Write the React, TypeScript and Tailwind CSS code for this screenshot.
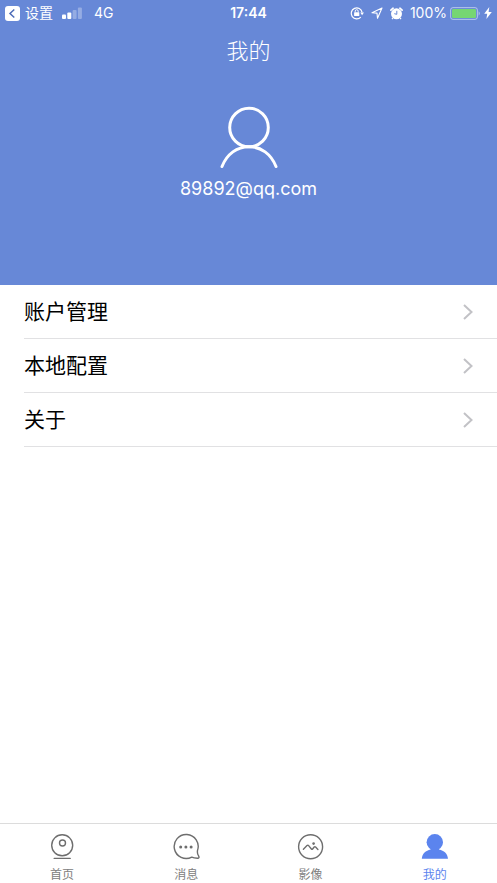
import type { ReactNode } from "react";

type TabKey = "home" | "message" | "image" | "mine";

const menus: { label: string; href: string }[] = [
	{ label: "账户管理", href: "#account" },
	{ label: "本地配置", href: "#config" },
	{ label: "关于", href: "#about" },
];

const tabs: { key: TabKey; label: string; icon: ReactNode }[] = [
	{ key: "home", label: "首页", icon: <CameraIcon /> },
	{ key: "message", label: "消息", icon: <MessageIcon /> },
	{ key: "image", label: "影像", icon: <ImageIcon /> },
	{ key: "mine", label: "我的", icon: <MineIcon /> },
];

/* ===== tab icons ===== */

function CameraIcon() {
	return (
		<svg className="h-7 w-7" viewBox="0 0 28 28" fill="none" stroke="currentColor" strokeWidth="1.4" aria-hidden="true">
			<circle cx="14.2" cy="12.3" r="10.5" />
			<circle cx="14.5" cy="10" r="3" />
			<path d="M6.2 25.4h16" strokeLinecap="round" />
		</svg>
	);
}

function MessageIcon() {
	return (
		<svg className="h-7 w-7" viewBox="0 0 28 28" fill="none" stroke="currentColor" strokeWidth="1.4" aria-hidden="true">
			<path
				d="M19.8 24.1A12 12 0 1 1 25.5 17.5C25.2 19.5 25.5 21.5 26.7 23.2C27.3 24.3 26.9 25.4 25.6 25.3C23.4 25.2 21.5 25 19.8 24.1Z"
				strokeLinejoin="round"
			/>
			<g fill="currentColor" stroke="none">
				<circle cx="8.7" cy="14" r="1.5" />
				<circle cx="13.9" cy="14" r="1.5" />
				<circle cx="19.1" cy="14" r="1.5" />
			</g>
		</svg>
	);
}

function ImageIcon() {
	return (
		<svg className="h-7 w-7" viewBox="0 0 28 28" fill="none" stroke="currentColor" strokeWidth="1.4" aria-hidden="true">
			<circle cx="13.6" cy="13.8" r="12" />
			<path
				d="M6.4 16.2L10 12.6Q10.8 11.8 11.6 12.6L14.4 16Q15 16.6 15.6 16L17.2 14Q17.9 13.3 18.6 14L20.9 16.4"
				strokeLinecap="round"
				strokeLinejoin="round"
			/>
			<circle cx="16.6" cy="10.6" r="1.3" fill="currentColor" stroke="none" />
		</svg>
	);
}

function MineIcon() {
	return (
		<svg className="h-7 w-7" viewBox="0 0 28 28" fill="currentColor" aria-hidden="true">
			<circle cx="13.8" cy="9.2" r="8.2" />
			<path d="M9.5 14h8.6L18 16.4C23 17.4 26.6 20.4 27 25.8H.8C1.2 20.4 4.8 17.4 9.6 16.4Z" />
		</svg>
	);
}

/* ===== status bar ===== */

function StatusBar() {
	return (
		<div className="grid h-[26px] grid-cols-[1fr_auto_1fr] items-center px-[5px] text-sm leading-5">
			<div className="flex items-center">
				<svg className="mr-[5px] h-[15px] w-[15px]" viewBox="0 0 15 15" aria-hidden="true">
					<rect width="15" height="15" rx="3" fill="#fff" />
					<path d="M9.3 3.5L5 7.5l4.3 4" fill="none" stroke="#4d6cb8" strokeWidth="1.5" />
				</svg>
				<a href="#settings">设置</a>
				<svg className="ml-[9px] mr-3 h-3 w-5" viewBox="0 0 20 12" fill="#fff" aria-hidden="true">
					<rect x="0" y="7.5" width="4" height="4.5" rx="1" />
					<rect x="5.3" y="5.5" width="4" height="6.5" rx="1" />
					<rect x="10.6" y="3" width="4" height="9" rx="1" opacity="0.3" />
					<rect x="15.9" y="0.5" width="4" height="11.5" rx="1" opacity="0.3" />
				</svg>
				<span>4G</span>
			</div>

			<time className="font-semibold">17:44</time>

			<div className="flex items-center justify-end">
				{/* rotation lock */}
				<svg className="mr-[7px] h-[14px] w-[14px]" viewBox="0 0 14 14" fill="none" stroke="#fff" aria-hidden="true">
					<path d="M10.8 11.1A5.5 5.5 0 1 1 12.1 6.4" strokeWidth="1.2" />
					<path d="M10.2 6.5h3.8l-1.9 2.7Z" fill="#fff" stroke="none" />
					<rect x="4.1" y="6.2" width="5.2" height="3.9" rx="0.5" fill="#fff" stroke="none" />
					<path d="M5.2 6.4V5.2a1.5 1.5 0 0 1 3 0v1.2" strokeWidth="1" />
				</svg>
				{/* location */}
				<svg className="mr-[7px] h-3 w-3" viewBox="0 0 12 12" fill="none" stroke="#fff" strokeWidth="1.1" strokeLinejoin="round" aria-hidden="true">
					<path d="M11 1L1 5.7l5 .4.5 5.1Z" />
				</svg>
				{/* alarm */}
				<svg className="mr-[7px] h-[13px] w-[13px]" viewBox="0 0 13 13" aria-hidden="true">
					<circle cx="6.5" cy="6.8" r="5.5" fill="#fff" />
					<path d="M.9 3.2L3.1 1.2M12.1 3.2L9.9 1.2" stroke="#fff" strokeWidth="1.7" strokeLinecap="round" />
					<path d="M2.8 11l-.8 1.1M10.2 11l.8 1.1" stroke="#fff" strokeWidth="1.2" />
					<path d="M6.8 3.8v3.5l-2.5-.6" fill="none" stroke="#6788d7" strokeWidth="1" />
				</svg>
				<span>100%</span>
				<svg className="ml-[3px] h-[13px] w-[31px]" viewBox="0 0 31 13" aria-hidden="true">
					<rect x="0.6" y="0.6" width="26.8" height="11.8" rx="2.4" fill="none" stroke="#fff" strokeOpacity="0.5" strokeWidth="1" />
					<rect x="2" y="2" width="24" height="9" rx="1.2" fill="#76d672" />
					<path d="M28.6 4.3q2.4 2.2 0 4.4Z" fill="#fff" fillOpacity="0.5" />
				</svg>
				<svg className="ml-[3px] h-3 w-2" viewBox="0 0 8 12" fill="#fff" aria-hidden="true">
					<path d="M5.3 0L.2 6.8h3L2.4 12 7.8 5H4.6Z" />
				</svg>
			</div>
		</div>
	);
}

export default function App() {
	const active: TabKey = "mine";

	return (
		<div className="flex min-h-screen flex-col bg-white font-['Inter','Noto_Sans_CJK_SC',sans-serif]">
			<header className="bg-[#6788d7] pb-20 text-white">
				<StatusBar />
				<h1 className="pb-[7px] pt-[9px] text-center text-[22px] font-light leading-8">我的</h1>

				{/* avatar + account */}
				<div className="flex flex-col items-center pt-8">
					<svg className="h-[62px] w-[58px]" viewBox="0 0 58 62" fill="none" stroke="#fff" strokeWidth="3" aria-hidden="true">
						<circle cx="29" cy="21.5" r="19.3" />
						<path d="M2 60.5C7 48 17 40.7 29 40.7S51 48 56 60.5" strokeLinecap="round" />
					</svg>
					<p className="mt-[5px] text-lg leading-8">89892@qq.com</p>
				</div>
			</header>

			<main className="flex-1">
				<ul className="pl-6">
					{menus.map((item) => (
						<li key={item.label} className="border-b border-[#e1e1e3]">
							<a href={item.href} className="flex h-[53px] items-center justify-between pr-6 text-black">
								<span className="pt-px text-[21px] leading-8">{item.label}</span>
								<svg className="h-4 w-[10px]" viewBox="0 0 10 16" fill="none" stroke="#c2c2c6" strokeWidth="2" aria-hidden="true">
									<path d="M1 1l7.5 7L1 15" />
								</svg>
							</a>
						</li>
					))}
				</ul>
			</main>

			<nav className="grid h-[60px] grid-cols-4 border-t border-[#dcdcdc] bg-white">
				{tabs.map((tab) => (
					<a
						key={tab.key}
						href={`#${tab.key}`}
						aria-current={tab.key === active ? "page" : undefined}
						className={
							tab.key === active
								? "flex flex-col items-center pt-[9px] text-[#5b84ee]"
								: "flex flex-col items-center pt-[9px] text-[#6e6e6e]"
						}
					>
						{tab.icon}
						<span className={tab.key === active ? "mt-1 text-xs leading-5" : "mt-1 text-xs leading-5 text-[#808080]"}>
							{tab.label}
						</span>
					</a>
				))}
			</nav>
		</div>
	);
}
